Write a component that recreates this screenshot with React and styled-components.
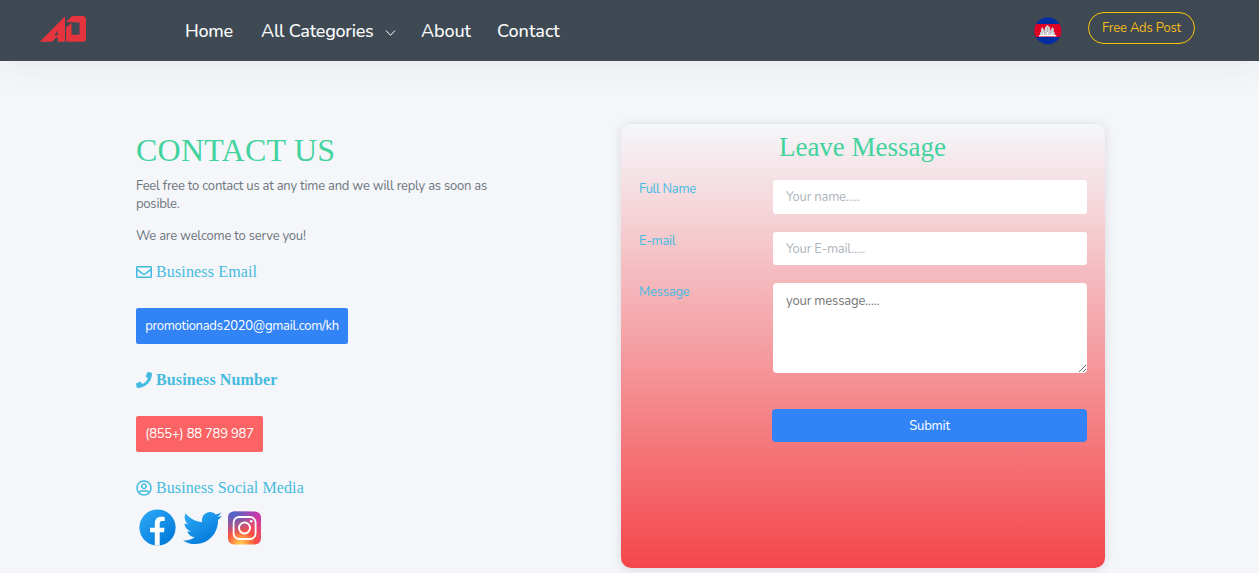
import React from "react";
import styled, { createGlobalStyle } from "styled-components";
import { FaRegEnvelope, FaPhone, FaRegUserCircle } from "react-icons/fa";

const sans = `Nunito, Lato, "Open Sans", sans-serif`;
const serif = `"Liberation Serif", "Times New Roman", serif`;

const GlobalStyle = createGlobalStyle`
  *, *::before, *::after { box-sizing: border-box; }
  html, body { margin: 0; height: 100%; overflow: hidden; }
  body { background: #f5f6fa; color: #6c757d; font: 400 13px/18px ${sans}; }
`;

const Navbar = styled.header`
  display: flex;
  align-items: flex-start;
  height: 61px;
  padding: 0 64px 0 39px;
  background: #3e4954;
  box-shadow: 0 0 35px 4px rgba(62, 73, 84, 0.08);
`;

const Logo = styled.svg`
  flex: none;
  width: 48px;
  height: 28px;
  margin-top: 15px;
`;

const NavLinks = styled.nav`
  display: flex;
  flex: 1;
  margin-left: 98px;
  padding-top: 18px;
`;

const NavLink = styled.a`
  display: flex;
  flex: none;
  align-items: center;
  width: ${(p) => p.$width}px;
  padding-left: ${(p) => p.$inset || 0}px;
  color: #fbfbfb;
  font-size: 18px;
  font-weight: 500;
  line-height: 26px;
  letter-spacing: ${(p) => p.$tracking || 0}px;
  white-space: nowrap;
`;

const Chevron = styled.svg`
  width: 11px;
  height: 8px;
  margin: 3px 0 0 auto;
`;

const Flag = styled.svg`
  flex: none;
  width: 28px;
  height: 28px;
  margin: 17px 26px 0 0;
`;

const PostButton = styled.button`
  width: 107px;
  height: 32px;
  margin-top: 12px;
  padding: 0 0 1px;
  border: 1px solid #ffc107;
  border-radius: 16px;
  background: transparent;
  color: #f4bc16;
  font: 400 13px/18px ${sans};
  letter-spacing: -0.18px;
  white-space: nowrap;
`;

const Page = styled.main`
  display: flex;
  align-items: flex-start;
  padding: 63px 154px 0 136px;
`;

const Info = styled.section`
  width: 485px;
  padding-top: 6px;
`;

const Title = styled.h1`
  margin: 0;
  color: #43d39e;
  font: 400 32px/40px ${serif};
  letter-spacing: 0.25px;
`;

const Paragraph = styled.p`
  width: 380px;
  margin: ${(p) => p.$top}px 0 0;
  color: #6c757d;
  letter-spacing: ${(p) => p.$tracking}px;
`;

const Heading = styled.h2`
  display: flex;
  align-items: center;
  gap: 4px;
  height: 20px;
  margin: ${(p) => p.$top}px 0 0;
  color: #45bbe0;
  font: ${(p) => (p.$bold ? 700 : 400)} 16px/20px ${serif};
  letter-spacing: ${(p) => p.$tracking || 0}px;

  svg { width: 16px; height: 16px; margin-top: -1px; }
`;

const Tag = styled.div`
  display: flex;
  align-items: center;
  justify-content: center;
  width: ${(p) => p.$width}px;
  height: 36px;
  margin-top: 26px;
  padding-bottom: 1px;
  border-radius: 2px;
  background: ${(p) => p.$color};
  color: #fff;
  letter-spacing: ${(p) => p.$tracking}px;
  white-space: nowrap;
`;

const Socials = styled.div`
  display: flex;
  align-items: center;
  margin: 11px 0 0 3px;
`;

const FacebookMark = styled.svg`
  width: 37px;
  height: 37px;
`;

const TwitterMark = styled.svg`
  width: 39px;
  height: 32px;
  margin-left: 7px;
`;

const InstagramMark = styled.svg`
  width: 33px;
  height: 34px;
  margin-left: 6px;
`;

const Card = styled.form`
  width: 484px;
  height: 444px;
  padding: 6px 18px 0;
  border-radius: 10px;
  background: linear-gradient(#f5f7fb, #f4464a);
  box-shadow: 0 1px 12px rgba(0, 0, 0, 0.12);
`;

const CardTitle = styled.h2`
  margin: 0;
  padding-right: 1px;
  color: #43d39e;
  font: 400 27px/34px ${serif};
  text-align: center;
`;

const Field = styled.div`
  display: grid;
  grid-template-columns: 134px 314px;
  margin-top: ${(p) => p.$top}px;
`;

const Label = styled.label`
  color: #45bbe0;
  letter-spacing: ${(p) => p.$tracking || 0}px;
`;

const Input = styled.input`
  width: 314px;
  height: ${(p) => p.$height}px;
  padding: 0 13px;
  border: 0;
  border-radius: 3px;
  background: #fff;
  font: 400 13px/18px ${sans};
  letter-spacing: -0.2px;

  &::placeholder { color: #adb5bd; opacity: 1; }
`;

const TextArea = styled.textarea`
  display: block;
  width: 314px;
  height: 90px;
  padding: 9px 13px;
  border: 0;
  border-radius: 4px;
  background: #fff;
  font: 400 13px/18px ${sans};
  letter-spacing: -0.15px;
  resize: both;

  &::placeholder { color: #757575; opacity: 1; }
`;

const Submit = styled.button`
  display: block;
  width: 315px;
  height: 33px;
  margin: 36px 0 0 133px;
  padding: 0;
  border: 0;
  border-radius: 4px;
  background: #3283f6;
  color: #fff;
  font: 400 13px/18px ${sans};
  letter-spacing: -0.15px;
`;

export default function App() {
  return (
    <>
      <GlobalStyle />
      <Navbar>
        <Logo viewBox="0 0 48 28" fill="#e5343d">
          <path d="M.8 26.7 26 1.2v25.5h-7.3v-4.3h-1.5l-4.1 4.3zM15 20.2h3.7V16z" fillRule="evenodd" />
          <path d="M27.1 7 33 1h12l2 2v22l-2 1.7H27.1V12.6L32.5 8v11.8h8V7.6z" />
        </Logo>
        <NavLinks>
          <NavLink $width={76} $tracking={-0.25}>Home</NavLink>
          <NavLink $width={135} $tracking={-0.25}>
            All Categories
            <Chevron viewBox="0 0 11 8" fill="none" stroke="#fff" strokeWidth="1">
              <path d="m1 1.5 4.5 4.8L10 1.5" />
            </Chevron>
          </NavLink>
          <NavLink $width={101} $inset={25} $tracking={-0.1}>About</NavLink>
          <NavLink $width={70}>Contact</NavLink>
        </NavLinks>
        <Flag viewBox="0 0 28 28">
          <clipPath id="flag-round"><circle cx="13.8" cy="13.8" r="13.5" /></clipPath>
          <g clipPath="url(#flag-round)">
            <path fill="#032ea1" d="M0 0h28v28H0z" />
            <path fill="#e00025" d="M0 7h28v13H0z" />
            <path fill="#d2d2d2" d="M5 19.3v-1.4h1v-2.7h1V12l1.3-2 1.3 2v1h1.2v-2l1-1.5L13.5 8l1.6 1.5 1 1.5v2h1.1v-1l1.3-2 1.3 2v3.2h1v2.7h1.4v1.4z" />
            <path stroke="#9a9a9a" strokeWidth=".6" d="M10.3 13v4M16.8 13v4M13.5 10v5" />
            <path fill="#fff" d="M5 18h17.2v1.3H5zM9 16h1v2H9zM13 15h1v3h-1zM17.5 16h1v2h-1z" />
          </g>
        </Flag>
        <PostButton>Free Ads Post</PostButton>
      </Navbar>

      <Page>
        <Info>
          <Title>CONTACT US</Title>
          <Paragraph $top={7} $tracking={-0.22}>
            Feel free to contact us at any time and we will reply as soon as <br />posible.
          </Paragraph>
          <Paragraph $top={14} $tracking={-0.22}>We are welcome to serve you!</Paragraph>
          <Heading $top={17} $tracking={0.15}><FaRegEnvelope /> Business Email</Heading>
          <Tag $width={212} $color="#3283f6" $tracking={-0.26}>promotionads2020@gmail.com/kh</Tag>
          <Heading $top={26} $tracking={0.13} $bold><FaPhone /> Business Number</Heading>
          <Tag $width={127} $color="#fb6364" $tracking={-0.2}>(855+) 88 789 987</Tag>
          <Heading $top={26} $tracking={0.1}><FaRegUserCircle /> Business Social Media</Heading>
          <Socials>
            <FacebookMark viewBox="0 0 37 37">
              <linearGradient id="fb-blue" x1="0.15" y1="0.1" x2="0.85" y2="0.9">
                <stop offset="0" stopColor="#2aa4f4" />
                <stop offset="1" stopColor="#007ad9" />
              </linearGradient>
              <circle cx="18.5" cy="18.5" r="18.1" fill="url(#fb-blue)" />
              <path fill="#fff" d="M15.8 36.6V23.2H11v-4.5h4.8v-4c0-4.8 2.4-7 6.4-7 1.9 0 3 .1 3.5.2v4.2h-2.8c-1.7 0-2.2 1-2.2 2.7v3.9h4.9l-.7 4.5h-4.2v13.4z" />
            </FacebookMark>
            <TwitterMark viewBox="6 9 36 29" preserveAspectRatio="none">
              <linearGradient id="tw-blue" x1="0.2" y1="0.1" x2="0.75" y2="0.9">
                <stop offset="0" stopColor="#2aa4f4" />
                <stop offset="1" stopColor="#007ad9" />
              </linearGradient>
              <path
                fill="url(#tw-blue)"
                d="M42 12.429c-1.323.586-2.746.977-4.247 1.162 1.526-.906 2.7-2.351 3.251-4.058-1.428.837-3.01 1.452-4.693 1.776C34.967 9.884 33.05 9 30.926 9c-4.08 0-7.387 3.278-7.387 7.32 0 .572.067 1.129.193 1.67-6.138-.308-11.582-3.226-15.224-7.654-.64 1.082-1 2.349-1 3.686 0 2.541 1.301 4.778 3.285 6.096-1.211-.037-2.351-.374-3.349-.914v.086c0 3.551 2.547 6.508 5.923 7.181-.617.169-1.269.263-1.941.263-.477 0-.942-.054-1.392-.135.94 2.902 3.667 5.023 6.898 5.086-2.528 1.96-5.712 3.134-9.174 3.134-.598 0-1.183-.034-1.761-.104C9.268 36.786 13.152 38 17.321 38c13.585 0 21.017-11.156 21.017-20.834 0-.317-.01-.633-.025-.945 1.45-1.024 2.7-2.316 3.687-3.792"
              />
            </TwitterMark>
            <InstagramMark viewBox="0 0 33 34">
              <defs>
                <radialGradient id="ig-warm" cx="0.38" cy="1" r="1">
                  <stop offset="0" stopColor="#ffd54f" />
                  <stop offset="0.2" stopColor="#ff9a45" />
                  <stop offset="0.45" stopColor="#ff4f40" />
                  <stop offset="0.75" stopColor="#e2477a" />
                  <stop offset="1" stopColor="#c837ab" />
                </radialGradient>
                <radialGradient id="ig-cool" cx="0.15" cy="0" r="0.75">
                  <stop offset="0" stopColor="#4168c9" />
                  <stop offset="1" stopColor="#4168c9" stopOpacity="0" />
                </radialGradient>
              </defs>
              <rect y=".5" width="33" height="33" rx="6" fill="url(#ig-warm)" />
              <rect y=".5" width="33" height="33" rx="6" fill="url(#ig-cool)" />
              <rect x="5.6" y="6" width="22" height="22" rx="5.5" fill="none" stroke="#fff" strokeWidth="1.8" />
              <circle cx="16.5" cy="17" r="5.5" fill="none" stroke="#fff" strokeWidth="1.9" />
              <circle cx="23.2" cy="10.3" r="1.3" fill="#fff" />
            </InstagramMark>
          </Socials>
        </Info>

        <Card>
          <CardTitle>Leave Message</CardTitle>
          <Field $top={16}>
            <Label $tracking={-0.35}>Full Name</Label>
            <Input $height={34} placeholder="Your name....." />
          </Field>
          <Field $top={18}>
            <Label $tracking={-0.25}>E-mail</Label>
            <Input $height={33} placeholder="Your E-mail....." />
          </Field>
          <Field $top={18}>
            <Label $tracking={-0.2}>Message</Label>
            <TextArea placeholder="your message....." />
          </Field>
          <Submit type="button">Submit</Submit>
        </Card>
      </Page>
    </>
  );
}
